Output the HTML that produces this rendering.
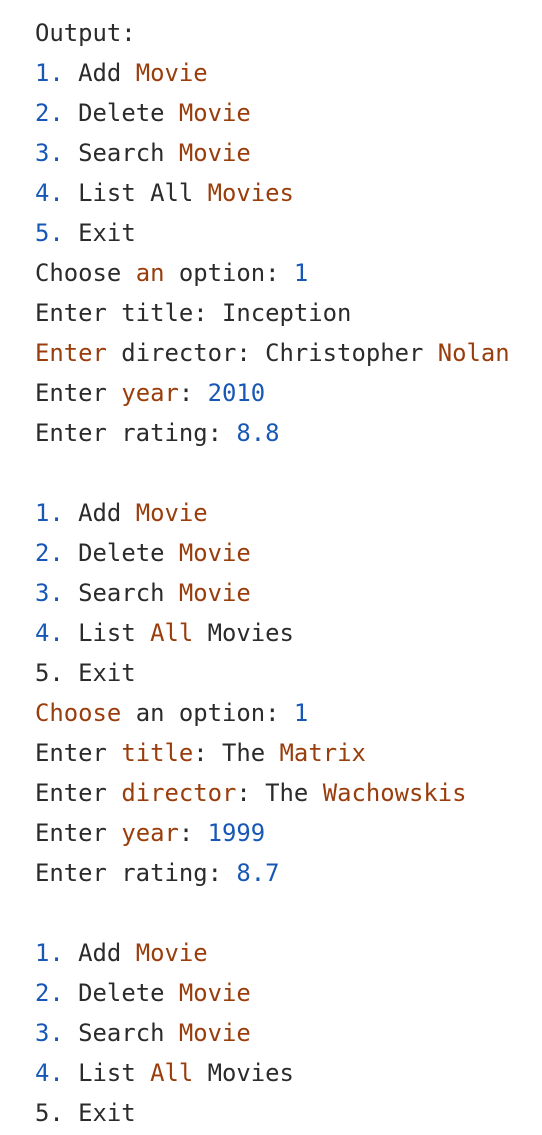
<!DOCTYPE html>
<html><head><meta charset="utf-8"><style>
html,body{margin:0;padding:0;background:#fff;}
body{width:542px;height:1135px;overflow:hidden;}
pre{margin:0;padding:13px 0 0 35px;font-family:"DejaVu Sans Mono","Liberation Mono",monospace;font-size:23.9px;line-height:40px;color:#2b2b2b;}
.b{color:#1757b5}.o{color:#9a3d0c}
</style></head><body><pre>Output:
<span class="b">1.</span> Add <span class="o">Movie</span>
<span class="b">2.</span> Delete <span class="o">Movie</span>
<span class="b">3.</span> Search <span class="o">Movie</span>
<span class="b">4.</span> List All <span class="o">Movies</span>
<span class="b">5.</span> Exit
Choose <span class="o">an</span> option: <span class="b">1</span>
Enter title: Inception
<span class="o">Enter</span> director: Christopher <span class="o">Nolan</span>
Enter <span class="o">year</span>: <span class="b">2010</span>
Enter rating: <span class="b">8.8</span>

<span class="b">1.</span> Add <span class="o">Movie</span>
<span class="b">2.</span> Delete <span class="o">Movie</span>
<span class="b">3.</span> Search <span class="o">Movie</span>
<span class="b">4.</span> List <span class="o">All</span> Movies
5. Exit
<span class="o">Choose</span> an option: <span class="b">1</span>
Enter <span class="o">title</span>: The <span class="o">Matrix</span>
Enter <span class="o">director</span>: The <span class="o">Wachowskis</span>
Enter <span class="o">year</span>: <span class="b">1999</span>
Enter rating: <span class="b">8.7</span>

<span class="b">1.</span> Add <span class="o">Movie</span>
<span class="b">2.</span> Delete <span class="o">Movie</span>
<span class="b">3.</span> Search <span class="o">Movie</span>
<span class="b">4.</span> List <span class="o">All</span> Movies
5. Exit</pre></body></html>
